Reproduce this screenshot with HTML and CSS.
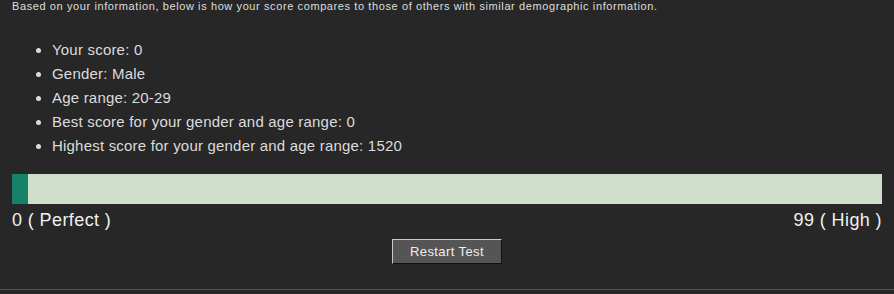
FILE: index.html
```html
<!DOCTYPE html>
<html>
<head>
<meta charset="utf-8">
<link rel="stylesheet" href="styles.css">
</head>
<body>
<div class="page">
  <p class="intro">Based on your information, below is how your score compares to those of others with similar demographic information.</p>
  <ul class="stats">
    <li>Your score: 0</li>
    <li>Gender: Male</li>
    <li>Age range: 20-29</li>
    <li>Best score for your gender and age range: 0</li>
    <li>Highest score for your gender and age range: 1520</li>
  </ul>
  <div class="bar"><div class="bar-fill" style="width:16px"></div></div>
  <div class="labels"><span>0 ( Perfect )</span><span>99 ( High )</span></div>
  <div class="actions"><button class="btn">Restart Test</button></div>
</div>
<div class="rule"></div>
</body>
</html>
```
FILE: styles.css
```css
html, body {
  margin: 0;
  padding: 0;
  background: #272727;
  color: #e6e6e6;
  font-family: "Liberation Sans", Arial, sans-serif;
}
.page {
  padding: 0 12px;
  height: 289px;
  box-sizing: border-box;
}
.intro {
  margin: 0;
  font-size: 11px;
  line-height: 13px;
  letter-spacing: 0.6px;
  color: #dedede;
}
.stats {
  margin: 25px 0 0 0;
  padding-left: 40px;
  font-size: 15px;
  line-height: 24px;
  letter-spacing: 0.2px;
  color: #dcdcdc;
}
.bar {
  margin-top: 16px;
  height: 30px;
  background: #cfdfcc;
  display: flex;
}
.bar-fill {
  background: #17826a;
  height: 100%;
}
.labels {
  margin-top: 5px;
  display: flex;
  justify-content: space-between;
  font-size: 18px;
  line-height: 22px;
  letter-spacing: 0.4px;
  color: #f0f0f0;
}
.actions {
  margin-top: 8px;
  display: flex;
  justify-content: center;
}
.btn {
  width: 110px;
  height: 25px;
  padding: 0;
  background: #555555;
  color: #eeeeee;
  font-family: "Liberation Sans", Arial, sans-serif;
  font-size: 13px;
  letter-spacing: 0.4px;
  border: 1px solid;
  border-color: #c8c8c8 #111111 #111111 #c8c8c8;
}
.rule {
  height: 1px;
  background: #555555;
}
```
